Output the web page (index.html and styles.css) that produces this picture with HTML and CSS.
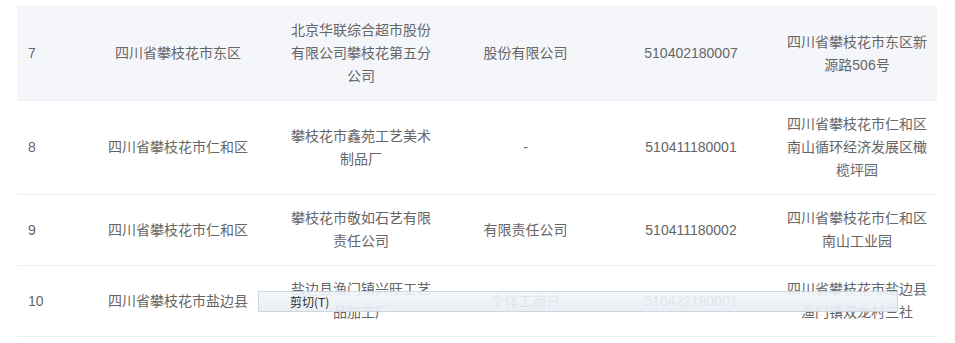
FILE: index.html
```html
<!DOCTYPE html>
<html lang="zh-CN">
<head>
<meta charset="utf-8">
<title>企业列表</title>
<link rel="stylesheet" href="styles.css">
</head>
<body>
<div class="page">
  <table class="grid">
    <colgroup>
      <col class="c-no"><col class="c-area"><col class="c-name"><col class="c-type"><col class="c-code"><col class="c-addr">
    </colgroup>
    <tbody>
      <tr class="hover">
        <td class="no">7</td>
        <td>四川省攀枝花市东区</td>
        <td>北京华联综合超市股份有限公司攀枝花第五分公司</td>
        <td>股份有限公司</td>
        <td>510402180007</td>
        <td>四川省攀枝花市东区新源路506号</td>
      </tr>
      <tr>
        <td class="no">8</td>
        <td>四川省攀枝花市仁和区</td>
        <td>攀枝花市鑫苑工艺美术制品厂</td>
        <td>-</td>
        <td>510411180001</td>
        <td>四川省攀枝花市仁和区南山循环经济发展区橄榄坪园</td>
      </tr>
      <tr>
        <td class="no">9</td>
        <td>四川省攀枝花市仁和区</td>
        <td>攀枝花市敬如石艺有限责任公司</td>
        <td>有限责任公司</td>
        <td>510411180002</td>
        <td>四川省攀枝花市仁和区南山工业园</td>
      </tr>
      <tr>
        <td class="no">10</td>
        <td>四川省攀枝花市盐边县</td>
        <td>盐边县渔门镇兴旺工艺品加工厂</td>
        <td>个体工商户</td>
        <td>510422180001</td>
        <td>四川省攀枝花市盐边县渔门镇双龙村三社</td>
      </tr>
    </tbody>
  </table>
  <div class="ctx-menu"><span class="ctx-item">剪切(T)</span></div>
</div>
</body>
</html>
```

FILE: styles.css
```css
html, body {
  margin: 0;
  padding: 0;
  background: #ffffff;
}

.page {
  position: relative;
  padding: 6px 18px 0 17px;
  font-family: "Liberation Sans", "Noto Sans CJK SC", sans-serif;
}

.grid {
  width: 920px;
  table-layout: fixed;
  border-collapse: collapse;
  font-size: 14px;
  line-height: 23px;
  color: #666666;
  border-top: 1px solid #f0f1f4;
}

.c-no { width: 63px; }
.c-area { width: 196px; }
.c-name { width: 170px; }
.c-type { width: 159px; }
.c-code { width: 172px; }
.c-addr { width: 160px; }

.grid td {
  padding: 12px 10px;
  text-align: center;
  vertical-align: middle;
  border-bottom: 1px solid #ebeef3;
}

.grid td.no {
  text-align: left;
  padding-left: 11px;
}

.grid tr.hover td {
  background: #f5f6fa;
}

.ctx-menu {
  position: absolute;
  left: 258px;
  top: 291px;
  width: 607px;
  height: 19px;
  border: 1px solid #c9d2de;
  background: linear-gradient(#f2f5f9, #e9eef5);
  opacity: 0.9;
  display: flex;
  align-items: center;
  padding-left: 31px;
  box-sizing: content-box;
}

.ctx-item {
  font-family: "Noto Sans CJK SC", "Liberation Sans", sans-serif;
  font-size: 12px;
  color: #111111;
  line-height: 19px;
}
```
